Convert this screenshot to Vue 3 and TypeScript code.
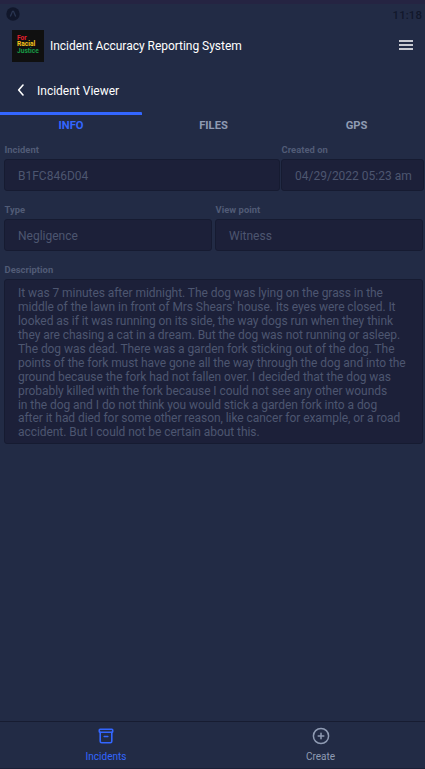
<script setup lang="ts">
interface Field {
  label: string
  value: string
  kind: string
}

const tabs: string[] = ['INFO', 'FILES', 'GPS']
const active = 0

const rows: Field[][] = [
  [
    { label: 'Incident', value: 'B1FC846D04', kind: 'incident' },
    { label: 'Created on', value: '04/29/2022 05:23 am', kind: 'created' },
  ],
  [
    { label: 'Type', value: 'Negligence', kind: 'type' },
    { label: 'View point', value: 'Witness', kind: 'viewpoint' },
  ],
]

const description: string[] = [
  'It was 7 minutes after midnight. The dog was lying on the grass in the',
  "middle of the lawn in front of Mrs Shears' house. Its eyes were closed. It",
  'looked as if it was running on its side, the way dogs run when they think',
  'they are chasing a cat in a dream. But the dog was not running or asleep.',
  'The dog was dead. There was a garden fork sticking out of the dog. The',
  'points of the fork must have gone all the way through the dog and into the',
  'ground because the fork had not fallen over. I decided that the dog was',
  'probably killed with the fork because I could not see any other wounds',
  'in the dog and I do not think you would stick a garden fork into a dog',
  'after it had died for some other reason, like cancer for example, or a road',
  'accident. But I could not be certain about this.',
]
</script>

<template>
  <div class="screen">
    <div class="status">
      <svg class="badge" viewBox="0 0 14 14">
        <circle cx="7" cy="7" r="6.7" fill="#11172b" />
        <path d="M4.3 9.6 6.5 4.3h1l2.2 5.3" fill="none" stroke="#2a3551" stroke-width="1.3" />
      </svg>
      <span class="clock">11:18</span>
    </div>

    <header class="brand">
      <div class="logo">
        <span class="red">For</span>
        <span class="yellow">Racial</span>
        <span class="green">Justice</span>
      </div>
      <h1>Incident Accuracy Reporting System</h1>
      <svg class="menu" viewBox="0 0 14 10">
        <path d="M0 1h14M0 5h14M0 9h14" stroke="#fff" stroke-width="1.4" />
      </svg>
    </header>

    <div class="subhead">
      <svg class="back" viewBox="0 0 8 12">
        <path d="M6 1 1.7 6 6 11" fill="none" stroke="#fff" stroke-width="1.6" stroke-linecap="round" stroke-linejoin="round" />
      </svg>
      <h2>Incident Viewer</h2>
    </div>

    <nav class="tabs">
      <div v-for="(tab, i) in tabs" :key="tab" class="tab" :class="{ active: i === active }">{{ tab }}</div>
    </nav>

    <main>
      <div v-for="(row, i) in rows" :key="i" class="row" :class="'row-' + i">
        <div v-for="field in row" :key="field.kind" class="field" :class="field.kind">
          <label>{{ field.label }}</label>
          <div class="box">{{ field.value }}</div>
        </div>
      </div>
      <div class="field description">
        <label>Description</label>
        <div class="box area">
          <div v-for="line in description" :key="line" class="line">{{ line }}</div>
        </div>
      </div>
    </main>

    <footer>
      <div class="item active">
        <svg viewBox="0 0 18 18" fill="none" stroke="currentColor" stroke-width="1.6" stroke-linejoin="round" stroke-linecap="round">
          <rect x="2.3" y="2.3" width="13.4" height="3" rx=".8" />
          <path d="M3.2 5.3v9q0 1.5 1.5 1.5h8.6q1.5 0 1.5-1.5v-9M7.2 9.5h3.6" />
        </svg>
        <span>Incidents</span>
      </div>
      <div class="item">
        <svg viewBox="0 0 18 18" fill="none" stroke="currentColor" stroke-width="1.5" stroke-linecap="round">
          <circle cx="9" cy="9" r="7.6" />
          <path d="M9 6.2v5.6M6.2 9h5.6" />
        </svg>
        <span>Create</span>
      </div>
    </footer>
  </div>
</template>

<style>
body {
  background: #222b45;
}
</style>

<style scoped>
.screen {
  box-sizing: border-box;
  display: flex;
  flex-direction: column;
  width: 425px;
  height: 769px;
  overflow: hidden;
  border-top: 4px solid #252442;
  border-bottom: 1px solid #1b2037;
  background: #222b45;
  font-family: Roboto, sans-serif;
  color: #fff;
}
.status {
  display: flex;
  align-items: center;
  justify-content: space-between;
  height: 20px;
  padding: 0 3px 0 6px;
}
.badge {
  width: 14px;
  height: 14px;
}
.clock {
  padding-top: 1px;
  font-size: 11.4px;
  font-weight: 500;
  line-height: 20px;
  letter-spacing: 0.1px;
  color: #11172b;
}
.brand {
  display: flex;
  align-items: center;
  height: 43px;
  padding: 0 12px;
}
.logo {
  box-sizing: border-box;
  display: flex;
  flex-direction: column;
  width: 32px;
  height: 32px;
  padding: 5px 0 0 5px;
  background: #101010;
  font-size: 6.6px;
  font-weight: 700;
  line-height: 6.5px;
}
.red {
  color: #e31f2e;
}
.yellow {
  color: #f8c41a;
}
.green {
  color: #189a45;
}
h1,
h2 {
  margin: 0;
  font-size: 12px;
  font-weight: 400;
  line-height: 16px;
}
h1 {
  flex: 1;
  margin-left: 6px;
  letter-spacing: -0.03px;
}
.menu {
  width: 14px;
  height: 10px;
  margin-bottom: 1px;
}
.subhead {
  display: flex;
  align-items: center;
  height: 45px;
  padding-left: 17px;
}
.back {
  width: 8px;
  height: 12px;
  margin-right: 12px;
}
h2 {
  padding-top: 2px;
}
.tabs {
  display: grid;
  grid-template-columns: 142px 143px 143px;
}
.tab {
  border-top: 3px solid transparent;
  text-align: center;
  font-size: 11.2px;
  font-weight: 700;
  line-height: 21px;
  color: #8f9bb3;
}
.tab.active {
  border-color: #3366ff;
  border-radius: 0 1px 0 0;
  color: #3366ff;
}
main {
  flex: 1;
  padding: 8px 2px 0 4px;
}
.row {
  display: flex;
  height: 60px;
}
.row-0 {
  gap: 1px;
  margin-right: -2px;
}
.row-1 {
  gap: 3px;
}
.incident {
  width: 276px;
}
.created {
  width: 143px;
}
.type,
.viewpoint {
  width: 208px;
}
label {
  display: block;
  height: 15px;
  padding-left: 0.5px;
  font-size: 9.4px;
  font-weight: 700;
  line-height: 12px;
  letter-spacing: 0.04px;
  color: #515b76;
}
.box {
  box-sizing: border-box;
  height: 32px;
  padding-left: 13px;
  border: 1px solid #161b31;
  border-radius: 3px;
  background: #1c2039;
  font-size: 12px;
  line-height: 32px;
  color: #4d5670;
}
.area {
  height: 165px;
  padding-top: 7px;
  letter-spacing: -0.058px;
}
.line {
  line-height: 13.93px;
  white-space: nowrap;
}
footer {
  display: flex;
  height: 46px;
  border-top: 1px solid #171c31;
}
.item {
  display: flex;
  flex: none;
  flex-direction: column;
  align-items: center;
  width: 212px;
  padding-top: 5px;
  font-size: 10px;
  line-height: 14px;
  color: #8f9bb3;
}
.item + .item {
  width: 217px;
}
.item.active {
  color: #3366ff;
}
.item svg {
  width: 18px;
  height: 18px;
  margin-bottom: 5px;
}
</style>
